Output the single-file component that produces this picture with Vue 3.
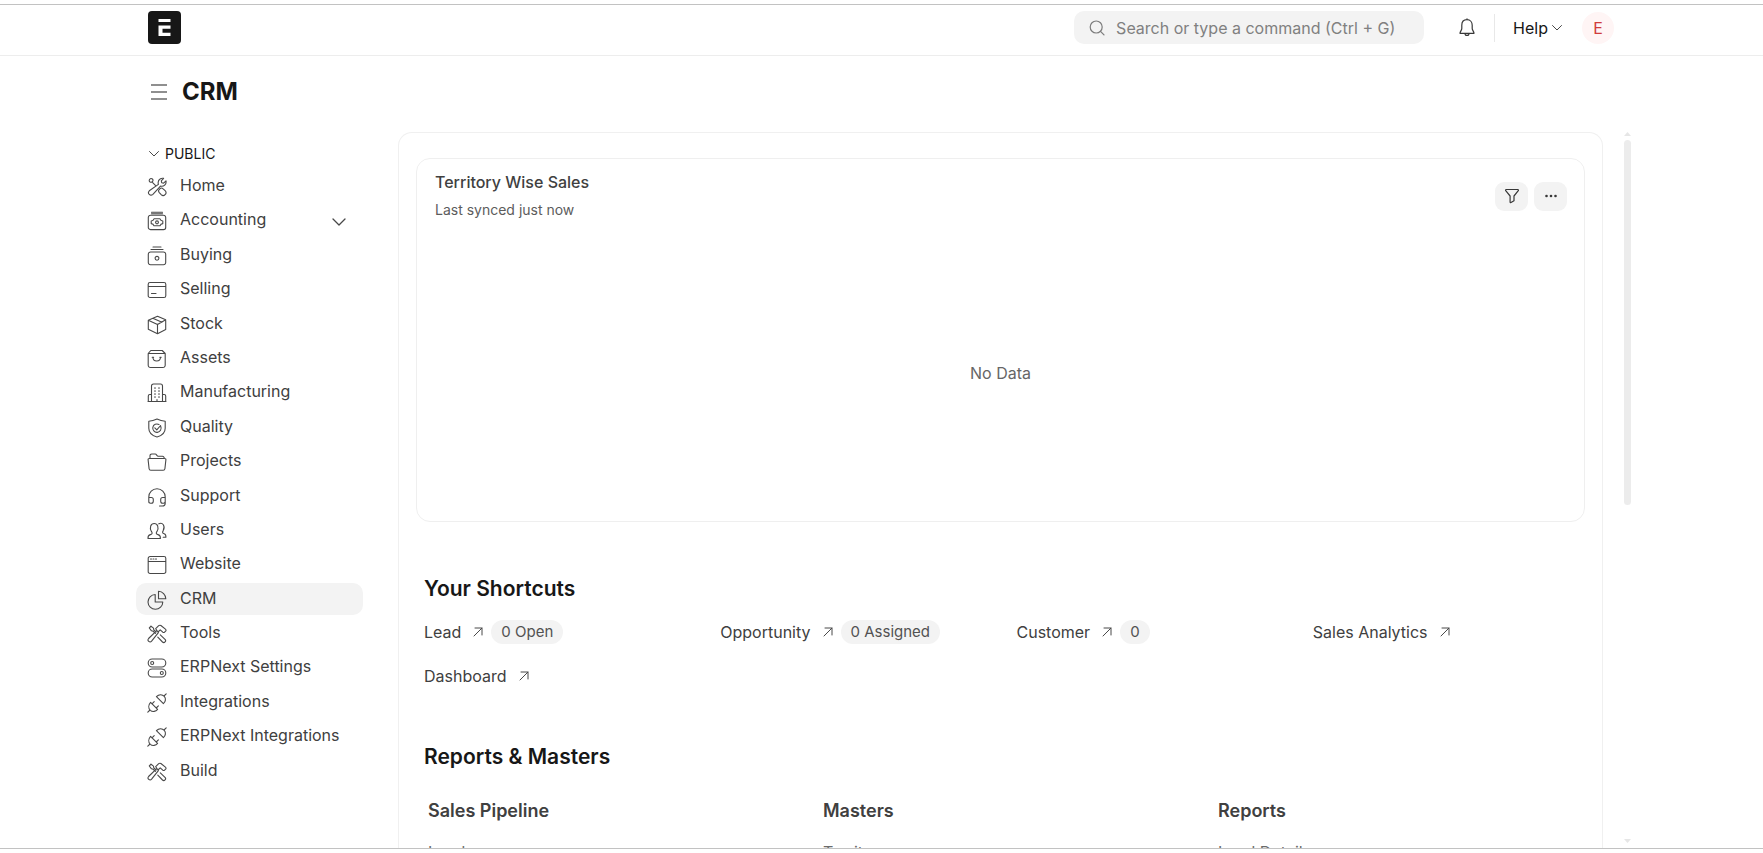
<script setup>
const navItems = [
  { label: 'Home', icon: 'wrench' },
  { label: 'Accounting', icon: 'money', expandable: true },
  { label: 'Buying', icon: 'wallet' },
  { label: 'Selling', icon: 'card' },
  { label: 'Stock', icon: 'box' },
  { label: 'Assets', icon: 'bag' },
  { label: 'Manufacturing', icon: 'building' },
  { label: 'Quality', icon: 'shield' },
  { label: 'Projects', icon: 'folder' },
  { label: 'Support', icon: 'headset' },
  { label: 'Users', icon: 'users' },
  { label: 'Website', icon: 'browser' },
  { label: 'CRM', icon: 'pie', active: true },
  { label: 'Tools', icon: 'hammer' },
  { label: 'ERPNext Settings', icon: 'toggles' },
  { label: 'Integrations', icon: 'plug' },
  { label: 'ERPNext Integrations', icon: 'plug' },
  { label: 'Build', icon: 'hammer' },
]

const icons = {
  wrench:
    'M2.2 3.4a1.9 1.9 0 1 0 3.2-1.4a1.9 1.9 0 0 0-3.2 1.4zM5.4 5.4l3 3M12.2 12.6c-1 .9-.8 2 .1 3l1.9 2a2.7 2.7 0 0 0 3.9-3.9l-2-1.9c-1-.9-2.100-1-3-.1zM11.400 7.400c-.6-2.300.2-4.600 2-5.600c1-.6 2.200-.7 3.200-.4l-2.300 2.400l.4 1.900l1.900.4l2.400-2.300c.7 3.400-2.300 6.200-5.500 5.300L5.900 17.300c-2.500 2.300-6-.9-3.600-3.500z',
  money:
    'M4.500 1.200h11M3.500 4.200h13a2.200 2.200 0 0 1 2.200 2.200v10a2.200 2.200 0 0 1-2.200 2.200h-13a2.200 2.200 0 0 1-2.200-2.200v-10a2.200 2.200 0 0 1 2.200-2.200zM4.500 2.800h11M7 7.800h6c.4 1.400 1.300 2 2.800 2.200v2.600c-1.500.2-2.400.8-2.800 2.200H7c-.4-1.400-1.300-2-2.800-2.200V10c1.500-.2 2.400-.8 2.800-2.200zM10 9.900a1.400 1.400 0 1 0 0 2.800a1.400 1.400 0 0 0 0-2.800z',
  wallet:
    'M6 1h8M4 3.500h12M3.500 6h13a2.200 2.200 0 0 1 2.200 2.200v8.300a2.200 2.200 0 0 1-2.200 2.200h-13a2.200 2.200 0 0 1-2.200-2.200V8.200A2.200 2.200 0 0 1 3.500 6zM10 10.400a1.900 1.900 0 1 0 0 3.800a1.900 1.900 0 0 0 0-3.800z',
  card:
    'M3 2.500h14a1.800 1.800 0 0 1 1.800 1.800v11.400a1.800 1.800 0 0 1-1.800 1.800H3a1.800 1.800 0 0 1-1.800-1.800V4.300A1.800 1.800 0 0 1 3 2.500zM1.200 6.500h17.600M4.500 13.500H9',
  box: 'M10.500 1.200l8.200 3.600v9.800l-8.200 4.200l-9.200-4.600V5.200zM1.300 5.200l9.200 4.200l8.200-4.600M10.500 9.400v9.400M5.800 3.300l9.200 3.900',
  bag: 'M3.800 1.500h11.400l3 3v11.700a2.300 2.300 0 0 1-2.300 2.300H3.500a2.300 2.300 0 0 1-2.300-2.300V4.500zM1.200 4.500h17M5.900 8.200c.2 5 7.400 5 7.600 0M5.200 8.200h1.400M12.800 8.200h1.400',
  building:
    'M4.500 18.500V3a2 2 0 0 1 2-2h7a2 2 0 0 1 2 2v15.500M1 18.500h18M4.500 11.500H2.800a1.500 1.500 0 0 0-1.500 1.500v5.500M15.500 11.500h1.700a1.500 1.500 0 0 1 1.500 1.500v5.500M7.500 5h1M11.500 5h1M7.500 8h1M11.500 8h1M7.500 11h1M11.500 11h1M7.500 14h1M11.500 14h1M10 16.500v2',
  shield:
    'M10 1.100c2.500 1.200 5.300 2 8.200 2.200v7c0 4.400-3.300 7.400-8.200 8.700c-4.900-1.300-8.200-4.300-8.200-8.700v-7C4.700 3.100 7.500 2.300 10 1.100zM13.800 8.500a4.200 4.200 0 1 1-1.800-2M7.800 9.800l2 2l3.800-4.300',
  folder:
    'M3 6.500V3.700a1.700 1.700 0 0 1 1.700-1.700h3.500c1.500 0 1.500 2.300 3 2.300h4.300a1.700 1.700 0 0 1 1.700 1.700v.5M2.300 6.500h15.400c.8 0 1.300.5 1.200 1.300l-1 9a1.700 1.700 0 0 1-1.700 1.500H3.800a1.700 1.700 0 0 1-1.700-1.500l-1-9c-.1-.8.4-1.300 1.200-1.300z',
  headset:
    'M1.800 15.300V10a8.200 8.200 0 0 1 16.400 0v6.200a2.800 2.800 0 0 1-2.800 2.800H12.500M1.800 10.500h2.500a2 2 0 0 1 2 2v1.800a2 2 0 0 1-2 2H3.500a1.700 1.700 0 0 1-1.700-1.700M18.200 10.500h-2.500a2 2 0 0 0-2 2v1.800a2 2 0 0 0 2 2h.8a1.700 1.700 0 0 0 1.700-1.700',
  users:
    'M1 17.500c-.2-2.500.5-3.400 2.400-3.900c2.200-.5 2-1.800 1-3.200C2.200 6.500 3.800 2.500 7.200 2.500s5 4 2.800 7.900c-1 1.400-1.200 2.700 1 3.200c1.900.5 2.600 1.400 2.400 3.900zM11.800 2.800c3.800-2 6.800 2.200 4.400 6.800c-1 1.700-.8 2.600 1 3.100c1.400.5 1.900 1.300 1.700 3.600h-2.700',
  browser:
    'M3 1.500h14a1.800 1.800 0 0 1 1.800 1.800v13.400a1.800 1.800 0 0 1-1.800 1.800H3a1.800 1.800 0 0 1-1.800-1.800V3.300A1.800 1.800 0 0 1 3 1.500zM1.200 6.500h17.600M3.500 4h1M6 4h1M8.500 4h1',
  pie: 'M8.200 4.500v7.500h7.600A7.400 7.400 0 1 1 8.200 4.500zM11.500 1.200a7.700 7.700 0 0 1 7.300 7.500h-7.300z',
  hammer:
    'M11.400 8.700L4.600 17.200a2 2 0 0 1-3-2.700L9.700 6.600M8.700 4.700l3-3c.7-.6 1.400-.6 2.200-.2l4.500 3.600c.7.6.8 1.300.2 2l-1 1c-.6.6-1.200.5-1.800.1l-2.600-2.400l-2.200 2.200zM4 2.200L2.300 4l2.200 2.800l1.500.3l2.400 2.300M4 2.200l2.500 1.900l.3 1.700l2.300 2.200M13.300 10.900l4.700 4.500a1.800 1.800 0 0 1-2.500 2.600l-4.700-4.800',
  toggles:
    'M5.200 1h9.600a4 4 0 0 1 0 8H5.200a4 4 0 0 1 0-8zM5.200 11h9.600a4 4 0 0 1 0 8H5.200a4 4 0 0 1 0-8zM5.200 3.500a1.500 1.500 0 1 0 0 3a1.500 1.500 0 0 0 0-3zM14.800 13.500a1.500 1.500 0 1 0 0 3a1.500 1.500 0 0 0 0-3z',
  plug: 'M.8 19.200l2.200-2.200M3.600 9.400l7 7c-1.800 2.200-5 2.800-7.300.9c-2.200-2.200-1.900-5.500.3-7.900zM5 10.800l2.200-2.200M9.200 15l2.200-2.200M19.200.8L17 3M9.400 3.600l7 7c2.200-1.800 2.800-5 .9-7.300c-2.200-2.200-5.500-1.900-7.900.3z',
}

const shortcuts = [
  { label: 'Lead', badge: '0 Open' },
  { label: 'Opportunity', badge: '0 Assigned' },
  { label: 'Customer', badge: '0' },
  { label: 'Sales Analytics' },
  { label: 'Dashboard' },
]

const linkCards = [
  { title: 'Sales Pipeline', links: ['Lead'] },
  { title: 'Masters', links: ['Territory'] },
  { title: 'Reports', links: ['Lead Details'] },
]
</script>

<template>
  <div class="frame">
    <div class="window">
      <header class="navbar">
        <div class="wrap navbar-inner">
          <a class="logo" href="#" aria-label="ERPNext">
            <svg width="33" height="33" viewBox="0 0 33 33">
              <rect width="33" height="33" rx="4" fill="#171717" />
              <path d="M10.500 8h12v3h-12zM10.500 14.500h12v3.200h-8v4h8V25h-12z" fill="#fff" />
            </svg>
          </a>
          <label class="search">
            <svg width="16" height="16" viewBox="0 0 16 16">
              <circle cx="7.200" cy="7" r="6" />
              <path d="M11.500 11.300L15 14.800" />
            </svg>
            <input type="text" placeholder="Search or type a command (Ctrl + G)" aria-label="Search" />
          </label>
          <button class="bell" type="button" aria-label="Notifications">
            <svg width="18" height="20" viewBox="0 0 18 20">
              <path d="M9 1.700c-3.300 0-5.200 2.400-5.200 5.600v3.200c0 1.800-1.800 2.900-1.800 4.800h14c0-1.900-1.800-3-1.800-4.800V7.300c0-3.200-1.900-5.600-5.200-5.600zM9 .8v.9M7 15.500c0 2.600 4 2.600 4 0" />
            </svg>
          </button>
          <span class="divider"></span>
          <button class="help" type="button">
            Help
            <svg width="10" height="6" viewBox="0 0 10 6"><path d="M.5.500L5 5L9.500.500" /></svg>
          </button>
          <button class="avatar" type="button" aria-label="Account">E</button>
        </div>
      </header>

      <div class="wrap page-head">
        <button class="menu" type="button" aria-label="Toggle sidebar">
          <svg width="16" height="18" viewBox="0 0 16 18"><path d="M0 2h16M0 9h16M0 16h16" /></svg>
        </button>
        <h1>CRM</h1>
      </div>

      <div class="wrap body">
        <nav class="sidebar" aria-label="Workspaces">
          <button class="group" type="button">
            <svg width="10" height="6" viewBox="0 0 10 6"><path d="M.5.500L5 5L9.500.500" /></svg>
            PUBLIC
          </button>
          <ul>
            <li v-for="item in navItems" :key="item.label" :class="{ active: item.active }">
              <a href="#">
                <svg class="nav-icon" width="20" height="20" viewBox="0 0 20 20"><path :d="icons[item.icon]" /></svg>
                {{ item.label }}
              </a>
              <button v-if="item.expandable" class="expand" type="button" aria-label="Expand Accounting">
                <svg width="14" height="8" viewBox="0 0 14 8"><path d="M1 1l6 6l6-6" /></svg>
              </button>
            </li>
          </ul>
        </nav>

        <main class="panel">
          <section class="chart-card">
            <div class="chart-head">
              <div class="chart-titles">
                <h2>Territory Wise Sales</h2>
                <p>Last synced just now</p>
              </div>
              <button type="button" aria-label="Filter">
                <svg width="16" height="16" viewBox="0 0 16 16" class="filter-icon">
                  <path d="M2.200 1.500h11.600c.6 0 .9.700.5 1.200L10 8v4.800L7 14.500c-.500.300-.9 0-.9-.5V8L1.700 2.700c-.4-.5-.1-1.200.500-1.200z" />
                </svg>
              </button>
              <button type="button" aria-label="More options">
                <svg width="14" height="4" viewBox="0 0 14 4" class="dots-icon">
                  <circle cx="2.500" cy="2" r="1.300" /><circle cx="7" cy="2" r="1.300" /><circle cx="11.500" cy="2" r="1.300" />
                </svg>
              </button>
            </div>
            <div class="chart-empty">No Data</div>
          </section>

          <section class="block">
            <h3>Your Shortcuts</h3>
            <div class="shortcuts">
              <a v-for="s in shortcuts" :key="s.label" class="shortcut" href="#">
                {{ s.label }}
                <svg width="10" height="10" viewBox="0 0 10 10"><path d="M1 9L9 1M2 1h7v7" /></svg>
                <span v-if="s.badge" class="badge">{{ s.badge }}</span>
              </a>
            </div>
          </section>

          <section class="block">
            <h3>Reports &amp; Masters</h3>
            <div class="link-cards">
              <div v-for="c in linkCards" :key="c.title">
                <h4>{{ c.title }}</h4>
                <a v-for="l in c.links" :key="l" href="#">{{ l }}</a>
              </div>
            </div>
          </section>
        </main>

        <div class="scrollbar" aria-hidden="true">
          <svg width="7" height="4" viewBox="0 0 7 4"><path d="M3.500 0L7 4H0z" /></svg>
          <div class="track"><div class="thumb"></div></div>
          <svg width="7" height="4" viewBox="0 0 7 4"><path d="M3.500 4L7 0H0z" /></svg>
        </div>
      </div>
    </div>
  </div>
</template>

<style>
body {
  background: #fff;
}
</style>

<style scoped>
.frame,
.frame * {
  box-sizing: border-box;
}
.frame {
  height: 100vh;
  padding: 4px 0;
  font-family: Inter, "Liberation Sans", sans-serif;
  font-size: 16px;
  line-height: 24px;
  color: #404040;
}
.window {
  height: 100%;
  display: flex;
  flex-direction: column;
  border-top: 1px solid #c2c2c2;
  border-bottom: 1px solid #c2c2c2;
  overflow: hidden;
}
h1, h2, h3, h4, p, ul {
  margin: 0;
  padding: 0;
  font-size: inherit;
}
a {
  color: inherit;
  text-decoration: none;
}
button {
  border: 0;
  padding: 0;
  background: none;
  font: inherit;
  color: inherit;
  display: flex;
  align-items: center;
}
svg {
  display: block;
  flex: none;
  fill: none;
  stroke: #484848;
  stroke-linecap: round;
  stroke-linejoin: round;
}
.wrap {
  width: 100%;
  max-width: 1491px;
  margin: 0 auto;
}
.navbar {
  flex: none;
  border-bottom: 1px solid #ededed;
}
.navbar-inner {
  display: flex;
  align-items: center;
  padding: 6px 13px 11px 12px;
}
.logo svg {
  stroke: none;
}
.search {
  display: flex;
  align-items: center;
  gap: 11px;
  width: 350px;
  height: 33px;
  margin-left: auto;
  padding: 0 15px;
  border-radius: 10px;
  background: #f3f3f3;
}
.search svg {
  stroke: #7c7c7c;
  stroke-width: 1.2;
}
.search input {
  flex: 1;
  min-width: 0;
  padding: 0;
  border: 0;
  outline: 0;
  background: none;
  font: inherit;
}
.search input::placeholder {
  color: #808080;
  opacity: 1;
}
.bell {
  margin: 0 18px 0 34px;
}
.bell svg {
  stroke: #383838;
  stroke-width: 1.2;
}
.divider {
  width: 1px;
  height: 28px;
  background: #e8e8e8;
}
.help {
  gap: 4px;
  margin: 0 20px 0 18px;
  color: #171717;
}
.avatar {
  justify-content: center;
  width: 32px;
  height: 32px;
  border-radius: 50%;
  background: #fff5f5;
  color: #d03c3c;
}
.page-head {
  flex: none;
  display: flex;
  align-items: center;
  gap: 15px;
  padding: 21px 15px 25px;
}
.menu svg {
  stroke: #6b6b6b;
  stroke-linecap: butt;
  stroke-width: 1.5;
}
h1 {
  font-size: 24px;
  line-height: 30px;
  font-weight: 700;
  color: #171717;
}
.body {
  flex: 1;
  min-height: 0;
  display: flex;
}
.sidebar {
  flex: none;
  width: 227px;
  margin-right: 35px;
  padding-top: 12px;
}
.group {
  gap: 6px;
  margin: 0 0 6px 13px;
  font-size: 14px;
  line-height: 20px;
  color: #171717;
}
.sidebar ul {
  display: flex;
  flex-direction: column;
  gap: 0.15em;
  list-style: none;
}
.sidebar li {
  display: flex;
  align-items: center;
  border-radius: 10px;
}
.sidebar li.active {
  background: #f3f3f3;
}
.sidebar li a {
  flex: 1;
  display: flex;
  align-items: center;
  gap: 13px;
  padding: 3px 0 5px 11px;
}
.nav-icon {
  margin-top: 4px;
  stroke-width: 1.1;
}
.expand {
  padding: 4px 17px 0 0;
}
.expand svg {
  stroke-width: 1.3;
}
.panel {
  flex: 1;
  min-width: 0;
  overflow: hidden;
  padding: 25px 17px 0;
  border: 1px solid #f0f0f0;
  border-bottom: 0;
  border-radius: 14px 14px 0 0;
}
.chart-card {
  border: 1px solid #efefef;
  border-radius: 14px;
}
.chart-head {
  display: flex;
  align-items: center;
  gap: 6px;
  padding: 13px 17px 0 18px;
}
.chart-titles {
  flex: 1;
}
h2 {
  line-height: 20px;
  font-weight: 500;
}
.chart-titles p {
  margin-top: 8px;
  font-size: 14px;
  line-height: 20px;
  color: #5c5c5c;
}
.chart-head button {
  justify-content: center;
  width: 33px;
  height: 29px;
  border-radius: 9px;
  background: #f3f3f3;
}
.filter-icon {
  stroke: #383838;
  stroke-width: 1.2;
}
.dots-icon {
  fill: #383838;
  stroke: none;
}
.chart-empty {
  display: flex;
  align-items: center;
  justify-content: center;
  min-height: 301px;
  padding-top: 4px;
  color: #666;
}
.block {
  padding: 53px 0 0 8px;
}
h3 {
  font-size: 21px;
  line-height: 28px;
  font-weight: 600;
  color: #171717;
}
.shortcuts {
  display: grid;
  grid-template-columns: repeat(4, 1fr);
  gap: 20px 24px;
  margin: 17px 0 2px;
}
.shortcut {
  display: flex;
  align-items: center;
  height: 24px;
}
.shortcut svg {
  margin: 0 8px 0 12px;
}
.badge {
  padding: 0 10px;
  border-radius: 12px;
  background: #f3f3f3;
  font-size: 15px;
  color: #525252;
}
.link-cards {
  display: grid;
  grid-template-columns: repeat(3, 1fr);
  gap: 24px;
  margin: 28px -4px 0 4px;
}
h4 {
  font-size: 18px;
  font-weight: 600;
}
.link-cards a {
  display: block;
  margin-top: 17px;
  color: #6b6b6b;
}
.scrollbar {
  flex: none;
  display: flex;
  flex-direction: column;
  gap: 4px;
  margin: 0 -4px 5px 21px;
}
.scrollbar svg {
  fill: #e6e6e6;
  stroke: none;
}
.track {
  flex: 1;
}
.thumb {
  width: 7px;
  height: 52.5%;
  border-radius: 4px;
  background: #ececec;
}
</style>
